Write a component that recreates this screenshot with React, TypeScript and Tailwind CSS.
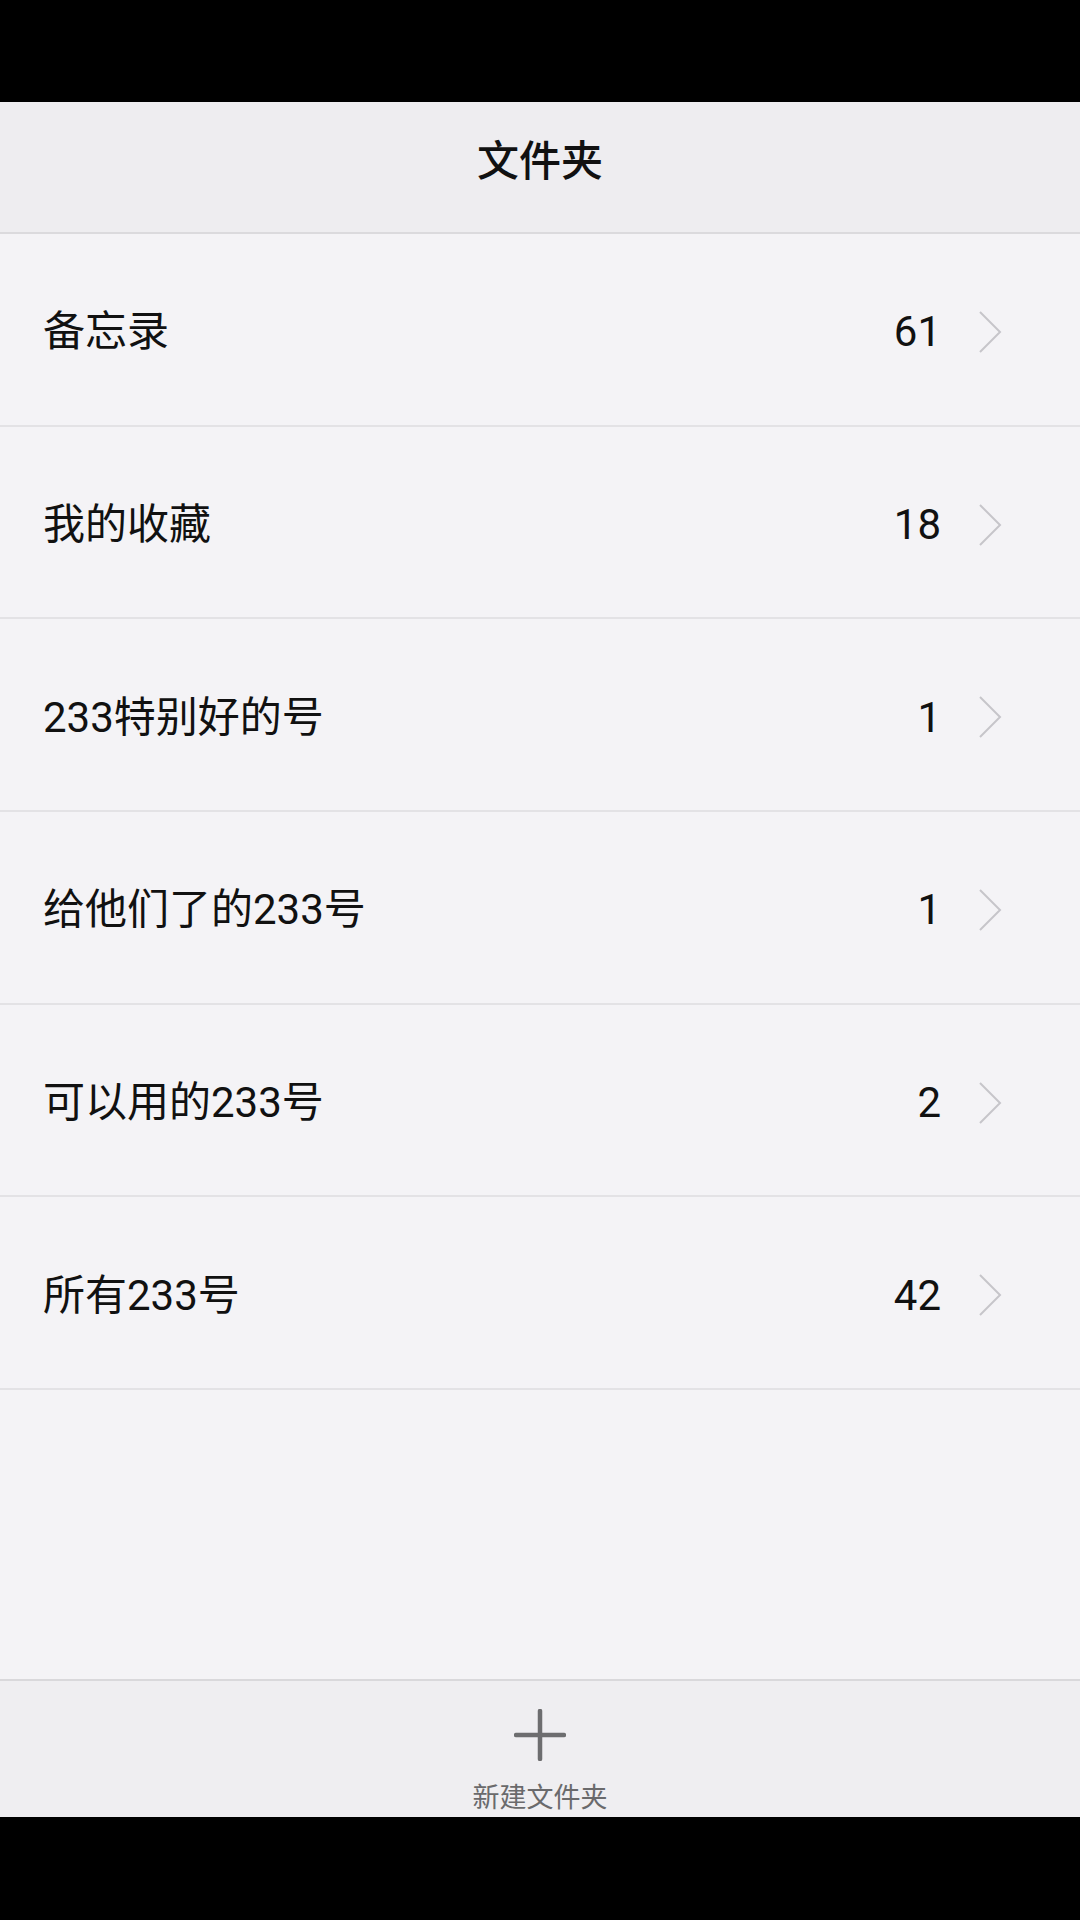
const folders = [
  { name: "备忘录", count: 61 },
  { name: "我的收藏", count: 18 },
  { name: "233特别好的号", count: 1 },
  { name: "给他们了的233号", count: 1 },
  { name: "可以用的233号", count: 2 },
  { name: "所有233号", count: 42 },
];

const FONT = { fontFamily: '"Roboto", "Noto Sans CJK SC", sans-serif' };

function Chevron() {
  return (
    <svg width="24" height="44" viewBox="0 0 24 44" className="shrink-0">
      <polyline
        points="2,2 22,22 2,42"
        fill="none"
        stroke="#c6c5ca"
        strokeWidth="2"
        strokeLinejoin="miter"
      />
    </svg>
  );
}

export default function App() {
  return (
    <div className="flex h-[1920px] w-[1080px] flex-col bg-black" style={FONT}>
      <div className="h-[102px] shrink-0 bg-black" />

      <header className="flex h-[132px] shrink-0 items-center justify-center border-b-2 border-[#dbdadd] bg-[#eeedf0] pb-[12px]">
        <h1 className="text-[42px] font-medium text-[#111]">文件夹</h1>
      </header>

      <main className="flex-1 bg-[#f4f3f6]">
        {folders.map((f) => (
          <div
            key={f.name}
            className="flex h-[192.7px] items-center border-b-2 border-[#e3e2e5] pl-[43px] pr-[78px] pt-[5px]"
          >
            <span className="flex-1 text-[42px] text-[#111]">{f.name}</span>
            <span className="text-[42px] text-[#111]">{f.count}</span>
            <span className="ml-[37px] flex items-center">
              <Chevron />
            </span>
          </div>
        ))}
      </main>

      <footer className="flex h-[138px] shrink-0 flex-col items-center border-t-2 border-[#d9d8db] bg-[#efeef1]">
        <svg width="52" height="52" viewBox="0 0 52 52" className="mt-[28px]">
          <line x1="26" y1="2" x2="26" y2="50" stroke="#6d6d6f" strokeWidth="4.5" strokeLinecap="round" />
          <line x1="2" y1="26" x2="50" y2="26" stroke="#6d6d6f" strokeWidth="4.5" strokeLinecap="round" />
        </svg>
        <span className="mt-[24px] text-[27px] leading-none text-[#6a6a6c]">新建文件夹</span>
      </footer>

      <div className="h-[103px] shrink-0 bg-black" />
    </div>
  );
}
